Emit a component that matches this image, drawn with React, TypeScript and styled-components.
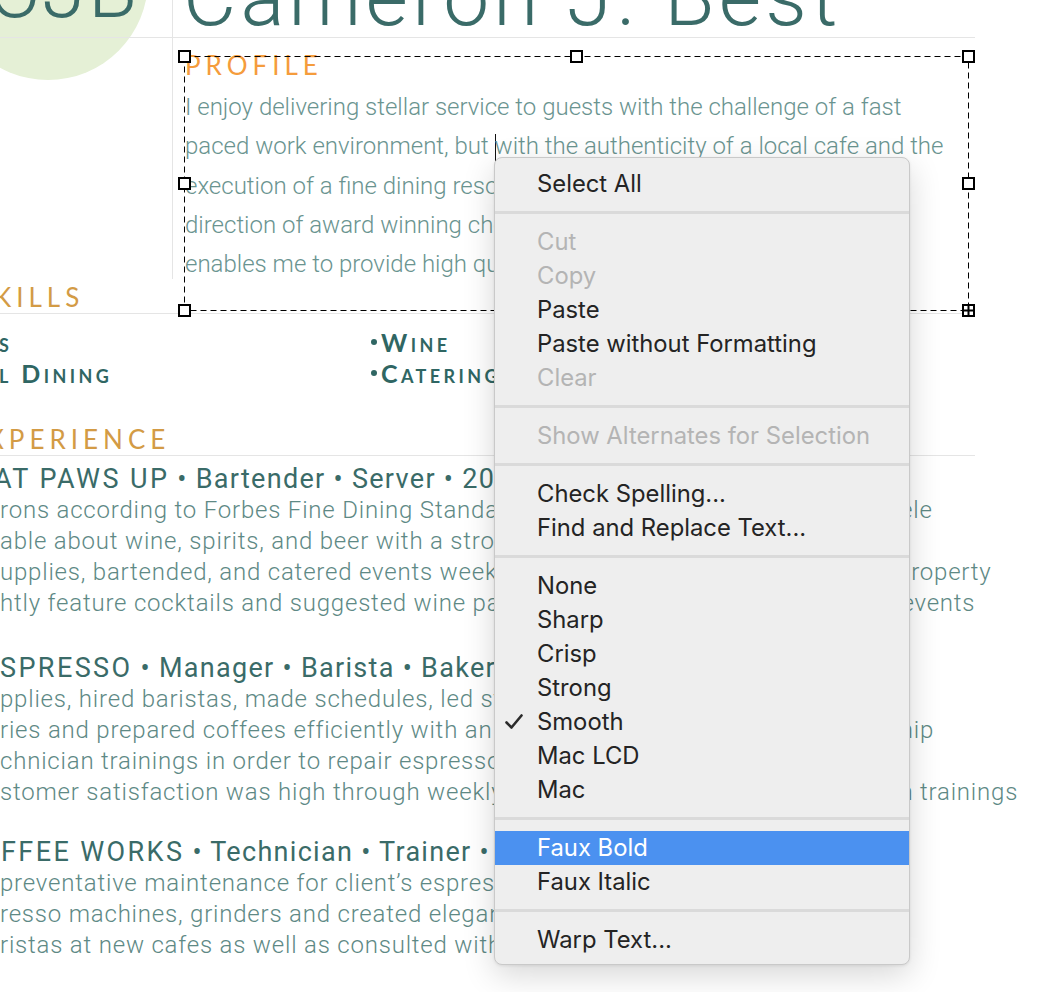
import React from 'react';
import styled, { createGlobalStyle } from 'styled-components';

const GlobalStyle = createGlobalStyle`
  html, body {
    margin: 0;
    padding: 0;
    background: #ffffff;
  }
  body {
    overflow: hidden;
    font-family: Roboto, "Liberation Sans", Arial, sans-serif;
    -webkit-font-smoothing: antialiased;
  }
`;

const TEAL = '#3a6b68';
const SOFT_TEAL = '#5e8985';
const RULE = '#e5e5e5';

const Canvas = styled.div`
  position: relative;
  width: 1054px;
  height: 992px;
  overflow: hidden;
`;

const Page = styled.div`
  position: relative;
  z-index: 0;
  width: 975px;
`;

const TopBlock = styled.div`
  display: grid;
  grid-template-columns: 172px 1fr;
  grid-template-rows: 38px 241px;
`;

const LogoCell = styled.div`
  position: relative;
  border-bottom: 1px solid ${RULE};
`;

const LogoDisc = styled.div`
  position: absolute;
  z-index: -1;
  left: -52px;
  top: -120px;
  width: 200px;
  height: 200px;
  border-radius: 50%;
  background: #e5f0d6;
`;

const Monogram = styled.div`
  margin: -50px 0 0 -12px;
  font-family: Roboto, sans-serif;
  font-weight: 300;
  font-size: 80px;
  line-height: 80px;
  letter-spacing: 2px;
  color: ${TEAL};
  white-space: nowrap;
`;

const NameCell = styled.div`
  border-left: 1px solid ${RULE};
  border-bottom: 1px solid ${RULE};
  padding-left: 10px;
`;

const Name = styled.h1`
  margin: -44px 0 0;
  font-family: Roboto, sans-serif;
  font-weight: 300;
  font-size: 82px;
  line-height: 82px;
  letter-spacing: 4.2px;
  color: ${TEAL};
  white-space: nowrap;
`;

const EmptyCell = styled.div``;

const ProfileCell = styled.div`
  border-left: 1px solid ${RULE};
  padding: 12px 0 0 12px;
`;

const SectionTitle = styled.h2<{ $tone: string; $shift?: number }>`
  margin: 0 0 0 ${(p) => p.$shift ?? 0}px;
  font-family: Lato, "Open Sans", sans-serif;
  font-weight: 400;
  font-size: 26px;
  line-height: 31px;
  letter-spacing: 5px;
  text-transform: uppercase;
  color: ${(p) => p.$tone};
  white-space: nowrap;
`;

const ProfileText = styled.p`
  margin: 7px 0 0;
  font-family: Roboto, sans-serif;
  font-weight: 300;
  font-size: 24px;
  line-height: 39.25px;
  color: #6a9490;
  white-space: nowrap;
`;

const Caret = styled.span`
  display: inline-block;
  width: 0;
  height: 27px;
  margin-right: -1px;
  border-left: 1.5px solid #111;
  vertical-align: -7px;
`;

const Section = styled.section<{ $top: number }>`
  margin-top: ${(p) => p.$top}px;
`;

const SectionHead = styled.div`
  border-bottom: 1px solid ${RULE};
`;

const SkillsGrid = styled.div`
  display: grid;
  grid-template-columns: 370px 1fr;
  margin-top: 13px;
`;

const SkillColumn = styled.ul`
  margin: 0;
  padding: 0;
  list-style: none;
`;

const Skill = styled.li<{ $shift?: number }>`
  margin-left: ${(p) => p.$shift ?? 0}px;
  font-family: Lato, "Open Sans", sans-serif;
  font-weight: 700;
  font-size: 25px;
  line-height: 31px;
  letter-spacing: 3.4px;
  font-variant: small-caps;
  color: #2f6663;
  white-space: nowrap;
`;

const Bullet = styled.span`
  display: inline-block;
  width: 6px;
  height: 6px;
  margin: 0 4px 0 1px;
  border-radius: 50%;
  background: #2f6663;
  vertical-align: 7px;
`;

const Entry = styled.article<{ $gap: number }>`
  margin-top: ${(p) => p.$gap}px;
`;

const EntryHeading = styled.div<{ $shift?: number }>`
  margin-left: ${(p) => p.$shift ?? 0}px;
  font-family: Roboto, sans-serif;
  font-weight: 400;
  font-size: 27px;
  line-height: 31px;
  letter-spacing: 1.3px;
  color: ${TEAL};
  white-space: nowrap;
`;

const Org = styled.span`
  letter-spacing: 2.4px;
`;

const EntryLine = styled.div`
  font-family: Roboto, sans-serif;
  font-weight: 300;
  font-size: 24px;
  line-height: 31px;
  letter-spacing: 0.8px;
  color: ${SOFT_TEAL};
  white-space: nowrap;
`;

const FrameOverlay = styled.svg`
  position: absolute;
  left: 0;
  top: 0;
  pointer-events: none;
`;

const Menu = styled.div`
  position: absolute;
  left: 494px;
  top: 157px;
  width: 416px;
  box-sizing: border-box;
  padding: 9px 0 7px;
  background: #eeeeee;
  border: 1px solid #c9c9c9;
  border-radius: 8px;
  box-shadow: 0 10px 32px rgba(0, 0, 0, 0.16), 0 1px 3px rgba(0, 0, 0, 0.08);
  font-family: Inter, "Noto Sans", sans-serif;
  font-size: 23.8px;
  overflow: hidden;
`;

const MenuItem = styled.div<{ $disabled?: boolean; $active?: boolean }>`
  position: relative;
  height: 34px;
  padding-left: 42px;
  line-height: 34px;
  white-space: nowrap;
  color: ${(p) => (p.$active ? '#ffffff' : p.$disabled ? '#b4b4b4' : '#242424')};
  background: ${(p) => (p.$active ? '#4b91f0' : 'transparent')};
`;

const Separator = styled.div`
  height: 3px;
  margin: 10px 0 11px;
  background: #dadada;
`;

const Check = styled.svg`
  position: absolute;
  left: 10px;
  top: 9px;
`;

type Job = {
  org: string;
  rest: string;
  shift: number;
  gap: number;
  lines: string[];
};

const jobs: Job[] = [
  {
    org: 'AT PAWS UP',
    rest: ' • Bartender • Server • 2016 – 2019',
    shift: -6,
    gap: 8,
    lines: [
      'rons according to Forbes Fine Dining Standards while serving a discerning clientele',
      'able about wine, spirits, and beer with a strong knowledge of pairings',
      'upplies, bartended, and catered events weekly for weddings both on and off the property',
      'htly feature cocktails and suggested wine pairings for guests at our dinners and events',
    ],
  },
  {
    org: 'SPRESSO',
    rest: ' • Manager • Barista • Baker • 2014 – 2016',
    shift: 0,
    gap: 34,
    lines: [
      'pplies, hired baristas, made schedules, led staff meetings and trainings',
      'ries and prepared coffees efficiently with an eye towards quality and craftsmanship',
      'chnician trainings in order to repair espresso machines in house',
      'stomer satisfaction was high through weekly tastings and all customer education trainings',
    ],
  },
  {
    org: 'FFEE WORKS',
    rest: ' • Technician • Trainer • 2012 – 2014',
    shift: 1,
    gap: 29,
    lines: [
      'preventative maintenance for client’s espresso machines and grinders',
      'resso machines, grinders and created elegant coffee bar designs',
      'ristas at new cafes as well as consulted with owners on menus',
    ],
  },
];

type Item = { label: string; disabled?: boolean; active?: boolean; checked?: boolean };

const menuGroups: Item[][] = [
  [{ label: 'Select All' }],
  [
    { label: 'Cut', disabled: true },
    { label: 'Copy', disabled: true },
    { label: 'Paste' },
    { label: 'Paste without Formatting' },
    { label: 'Clear', disabled: true },
  ],
  [{ label: 'Show Alternates for Selection', disabled: true }],
  [{ label: 'Check Spelling...' }, { label: 'Find and Replace Text...' }],
  [
    { label: 'None' },
    { label: 'Sharp' },
    { label: 'Crisp' },
    { label: 'Strong' },
    { label: 'Smooth', checked: true },
    { label: 'Mac LCD' },
    { label: 'Mac' },
  ],
  [{ label: 'Faux Bold', active: true }, { label: 'Faux Italic' }],
  [{ label: 'Warp Text...' }],
];

const Handle: React.FC<{ x: number; y: number; cross?: boolean }> = ({ x, y, cross }) => (
  <g>
    <rect x={x - 5.5} y={y - 5.5} width={11} height={11} fill="#fff" stroke="#000" strokeWidth={2} />
    {cross && (
      <path d={`M${x - 5.5} ${y}H${x + 5.5}M${x} ${y - 5.5}V${y + 5.5}`} stroke="#000" strokeWidth={2} />
    )}
  </g>
);

const SelectionFrame: React.FC = () => (
  <FrameOverlay width={1054} height={992}>
    <rect
      x={184.5}
      y={56.5}
      width={784}
      height={254}
      fill="none"
      stroke="#000"
      strokeWidth={1}
      strokeDasharray="6 4"
    />
    <Handle x={184.5} y={56.5} />
    <Handle x={576.5} y={56.5} />
    <Handle x={968.5} y={56.5} />
    <Handle x={184.5} y={183.5} />
    <Handle x={968.5} y={183.5} />
    <Handle x={184.5} y={310.5} />
    <Handle x={576.5} y={310.5} />
    <Handle x={968.5} y={310.5} cross />
  </FrameOverlay>
);

const ContextMenu: React.FC = () => (
  <Menu>
    {menuGroups.map((group, gi) => (
      <React.Fragment key={gi}>
        {gi > 0 && <Separator />}
        {group.map((item) => (
          <MenuItem key={item.label} $disabled={item.disabled} $active={item.active}>
            {item.checked && (
              <Check width={18} height={16} viewBox="0 0 18 16">
                <path d="M1.5 8.5 L6.5 13.5 L16.5 1.5" fill="none" stroke="#2b2b2b" strokeWidth={2.6} strokeLinecap="round" strokeLinejoin="round" />
              </Check>
            )}
            {item.label}
          </MenuItem>
        ))}
      </React.Fragment>
    ))}
  </Menu>
);

export default function App() {
  return (
    <Canvas>
      <GlobalStyle />
      <Page>
        <TopBlock>
          <LogoCell>
            <LogoDisc />
            <Monogram>CJB</Monogram>
          </LogoCell>
          <NameCell>
            <Name>Cameron J. Best</Name>
          </NameCell>
          <EmptyCell />
          <ProfileCell>
            <SectionTitle $tone="#f59c3c">Profile</SectionTitle>
            <ProfileText>
              I enjoy delivering stellar service to guests with the challenge of a fast
              <br />
              paced work environment, but <Caret />with the authenticity of a local cafe and the
              <br />
              execution of a fine dining resort. Training under the
              <br />
              direction of award winning chefs and sommeliers
              <br />
              enables me to provide high quality hospitality.
            </ProfileText>
          </ProfileCell>
        </TopBlock>

        <Section $top={3}>
          <SectionHead>
            <SectionTitle $tone="#d39b45" $shift={-6}>Kills</SectionTitle>
          </SectionHead>
          <SkillsGrid>
            <SkillColumn>
              <Skill $shift={-1}>s</Skill>
              <Skill $shift={-1}>l Dining</Skill>
            </SkillColumn>
            <SkillColumn>
              <Skill><Bullet />Wine</Skill>
              <Skill><Bullet />Catering</Skill>
            </SkillColumn>
          </SkillsGrid>
        </Section>

        <Section $top={35}>
          <SectionHead>
            <SectionTitle $tone="#d39b45" $shift={-13}>xperience</SectionTitle>
          </SectionHead>
          {jobs.map((job) => (
            <Entry key={job.org} $gap={job.gap}>
              <EntryHeading $shift={job.shift}>
                <Org>{job.org}</Org>
                {job.rest}
              </EntryHeading>
              {job.lines.map((line) => (
                <EntryLine key={line}>{line}</EntryLine>
              ))}
            </Entry>
          ))}
        </Section>
      </Page>
      <SelectionFrame />
      <ContextMenu />
    </Canvas>
  );
}
